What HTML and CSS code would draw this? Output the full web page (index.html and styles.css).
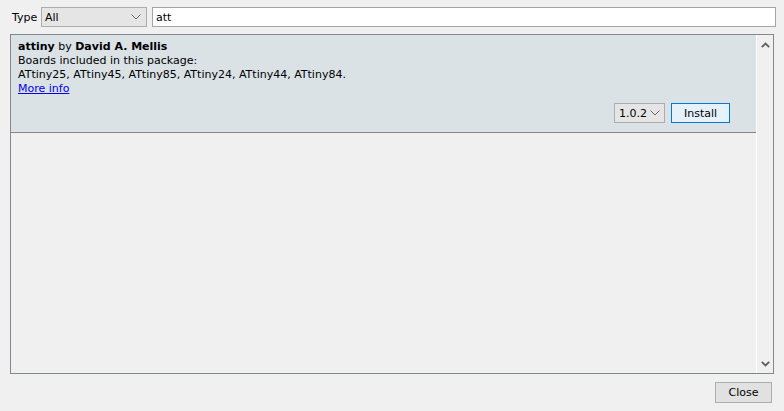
FILE: index.html
```html
<!DOCTYPE html>
<html>
<head>
<meta charset="utf-8">
<link rel="stylesheet" href="styles.css">
</head>
<body>
<div class="top">
  <span class="type-label">Type</span>
  <div class="combo type-combo"><span>All</span>
    <svg class="chev" width="10" height="6" viewBox="0 0 10 6"><path d="M0.5 0.5 L5 5 L9.5 0.5" fill="none" stroke="#666" stroke-width="1"/></svg>
  </div>
  <div class="search">att</div>
</div>
<div class="list">
  <div class="items">
    <div class="item">
      <div class="line"><b>attiny</b> by <b>David A. Mellis</b></div>
      <div class="line">Boards included in this package:</div>
      <div class="line">ATtiny25, ATtiny45, ATtiny85, ATtiny24, ATtiny44, ATtiny84.</div>
      <div class="line"><a class="more" href="#">More info</a></div>
      <div class="actions">
        <div class="combo ver-combo"><span>1.0.2</span>
          <svg class="chev" width="10" height="6" viewBox="0 0 10 6"><path d="M0.5 0.5 L5 5 L9.5 0.5" fill="none" stroke="#666" stroke-width="1"/></svg>
        </div>
        <div class="btn install">Install</div>
      </div>
    </div>
  </div>
  <div class="scrollbar">
    <svg width="9" height="6" viewBox="0 0 9 6"><path d="M0.8 5.2 L4.5 1.5 L8.2 5.2" fill="none" stroke="#606060" stroke-width="1.8"/></svg>
    <svg width="9" height="6" viewBox="0 0 9 6"><path d="M0.8 0.8 L4.5 4.5 L8.2 0.8" fill="none" stroke="#606060" stroke-width="1.8"/></svg>
  </div>
</div>
<div class="bottom">
  <div class="btn close">Close</div>
</div>
</body>
</html>
```
FILE: styles.css
```css
html, body {
  margin: 0;
  padding: 0;
  background: #f0f0f0;
  font-family: "DejaVu Sans", sans-serif;
  font-size: 11px;
  color: #000;
  width: 784px;
  height: 411px;
  overflow: hidden;
}
.top {
  display: flex;
  align-items: center;
  padding: 7px 8px 0 12px;
  height: 20px;
}
.type-label {
  width: 29px;
}
.combo {
  box-sizing: border-box;
  display: flex;
  align-items: center;
  justify-content: space-between;
  background: #e5e5e5;
  border: 1px solid #adadad;
  height: 20px;
  padding: 0 5px 0 3px;
}
.type-combo {
  width: 106px;
  margin-right: 5px;
}
.chev {
  display: block;
}
.search {
  box-sizing: border-box;
  flex: 1;
  height: 20px;
  background: #fff;
  border: 1px solid #a5a5a5;
  padding: 0 3px;
  display: flex;
  align-items: center;
}
.list {
  box-sizing: border-box;
  margin: 7px 10px 0 10px;
  height: 340px;
  border: 1px solid #828790;
  display: flex;
}
.items {
  flex: 1;
  border-right: 1px solid #fff;
}
.item {
  background: #dae2e5;
  border-bottom: 1px solid #828790;
  padding: 5px 26px 9px 7px;
}
.line {
  line-height: 14px;
  white-space: nowrap;
}
.more {
  color: #0000ee;
  text-decoration: underline;
}
.actions {
  display: flex;
  justify-content: flex-end;
  align-items: center;
  margin-top: 7px;
}
.ver-combo {
  width: 51px;
  margin-right: 6px;
  padding: 0 4px 0 4px;
}
.btn {
  box-sizing: border-box;
  display: flex;
  align-items: center;
  justify-content: center;
  height: 20px;
}
.install {
  width: 59px;
  background: #e5f1fb;
  border: 1px solid #0078d7;
}
.scrollbar {
  width: 16px;
  display: flex;
  flex-direction: column;
  justify-content: space-between;
  align-items: center;
  padding: 7px 0 6px 0;
  background: #f0f0f0;
}
.scrollbar svg {
  display: block;
}
.bottom {
  display: flex;
  justify-content: flex-end;
  padding: 8px 12px 0 0;
}
.close {
  width: 57px;
  height: 21px;
  background: #e1e1e1;
  border: 1px solid #adadad;
}
```
